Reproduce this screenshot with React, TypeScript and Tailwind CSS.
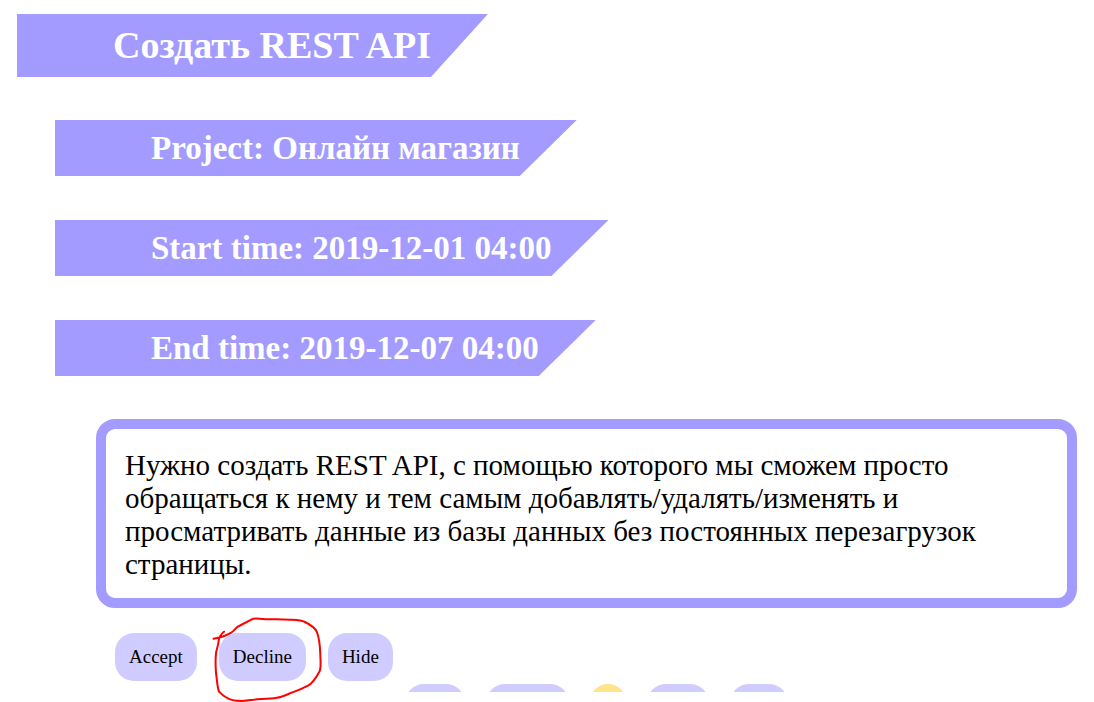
import type { ReactNode } from "react";

const details = [
  "Project: Онлайн магазин",
  "Start time: 2019-12-01 04:00",
  "End time: 2019-12-07 04:00",
];

const pages = [
  { label: "First", style: "w-[60px] bg-[#d0ccff]" },
  { label: "Previous", style: "w-[83px] bg-[#d0ccff]" },
  { label: "1", style: "w-9 bg-[#ffe48a]" },
  { label: "Next", style: "w-[62px] bg-[#d0ccff]" },
  { label: "Last", style: "w-[58px] bg-[#d0ccff]" },
];

function Action({ children }: { children: ReactNode }) {
  return (
    <button type="button" className="h-12 rounded-[19px] bg-[#d0ccff] px-[14px] text-[19px]">
      {children}
    </button>
  );
}

function PenCircle() {
  return (
    <svg
      aria-hidden="true"
      viewBox="0 0 116 88"
      className="pointer-events-none absolute -top-[19px] -left-[9px] z-10 h-[88px] w-[116px] max-w-none"
      fill="none"
      stroke="#ff0000"
      strokeWidth="2"
      strokeLinecap="round"
      strokeLinejoin="round"
    >
      <path d="M3.5 24.7 C8 24 17 21 21.7 18.3 C25 16 26 13 30 11.5 L43.3 4.7 C49 4 54 5.5 60 5.3 C67 5 75 5.3 80 5.7 C86 6 91 6 95 8 C99 10 105 14 106.7 17.7 C109 23 110 32 110.3 40 C110.3 46 111.5 53 109.5 57.5 C107 62 102 70 98 71.7 C91 75.5 86 77 80 79.3 C75 81.5 71 83.3 66.7 83.7 C59 85 50 85 43.3 85.7 C39 86 36 87 31.7 87 C27 87 21 86 18.3 84.7 C14 82.5 11 80 9 77.7 C7 72 7 65 6 59 C5.5 52 5.5 44 6 39.3 C6.5 35 8.5 31 8.5 27.7 C9 23 11 20 14 17.7" />
    </svg>
  );
}

export default function App() {
  return (
    <main className="bg-white px-[17px] pt-[14px] pb-[10px] font-['Liberation_Serif',serif] text-black">
      <h1 className="w-fit bg-[#a39bff] py-[9px] pr-[57px] pl-24 text-[38px] leading-[45px] font-bold text-white [clip-path:polygon(0_0,100%_0,calc(100%-57px)_100%,0_100%)]">
        Создать REST API
      </h1>
      <div className="mt-[43px] ml-[38px] flex flex-col items-start gap-11">
        {details.map((text) => (
          <h2
            key={text}
            className="bg-[#a39bff] py-[9px] pr-[57px] pl-24 text-[33px] leading-[38px] font-bold text-white [clip-path:polygon(0_0,100%_0,calc(100%-57px)_100%,0_100%)]"
          >
            {text}
          </h2>
        ))}
      </div>
      <p className="mt-[43px] ml-[79px] rounded-[19px] border-10 border-[#a39bff] px-[19px] pt-5 pb-[17px] text-[29px] leading-[33px]">
        Нужно создать REST API, с помощью которого мы сможем просто обращаться к нему и тем самым
        добавлять/удалять/изменять и просматривать данные из базы данных без постоянных перезагрузок
        страницы.
      </p>
      <div className="mt-[25px] ml-[98px] flex gap-[22px]">
        <Action>Accept</Action>
        <div className="relative">
          <Action>Decline</Action>
          <PenCircle />
        </div>
        <Action>Hide</Action>
      </div>
      <nav
        aria-label="Pagination"
        className="mt-[3px] ml-[98px] flex h-2 justify-center gap-[21px] overflow-hidden"
      >
        {pages.map(({ label, style }) => (
          <button
            key={label}
            type="button"
            aria-label={label}
            className={`h-12 shrink-0 rounded-[19px] ${style}`}
          />
        ))}
      </nav>
    </main>
  );
}
